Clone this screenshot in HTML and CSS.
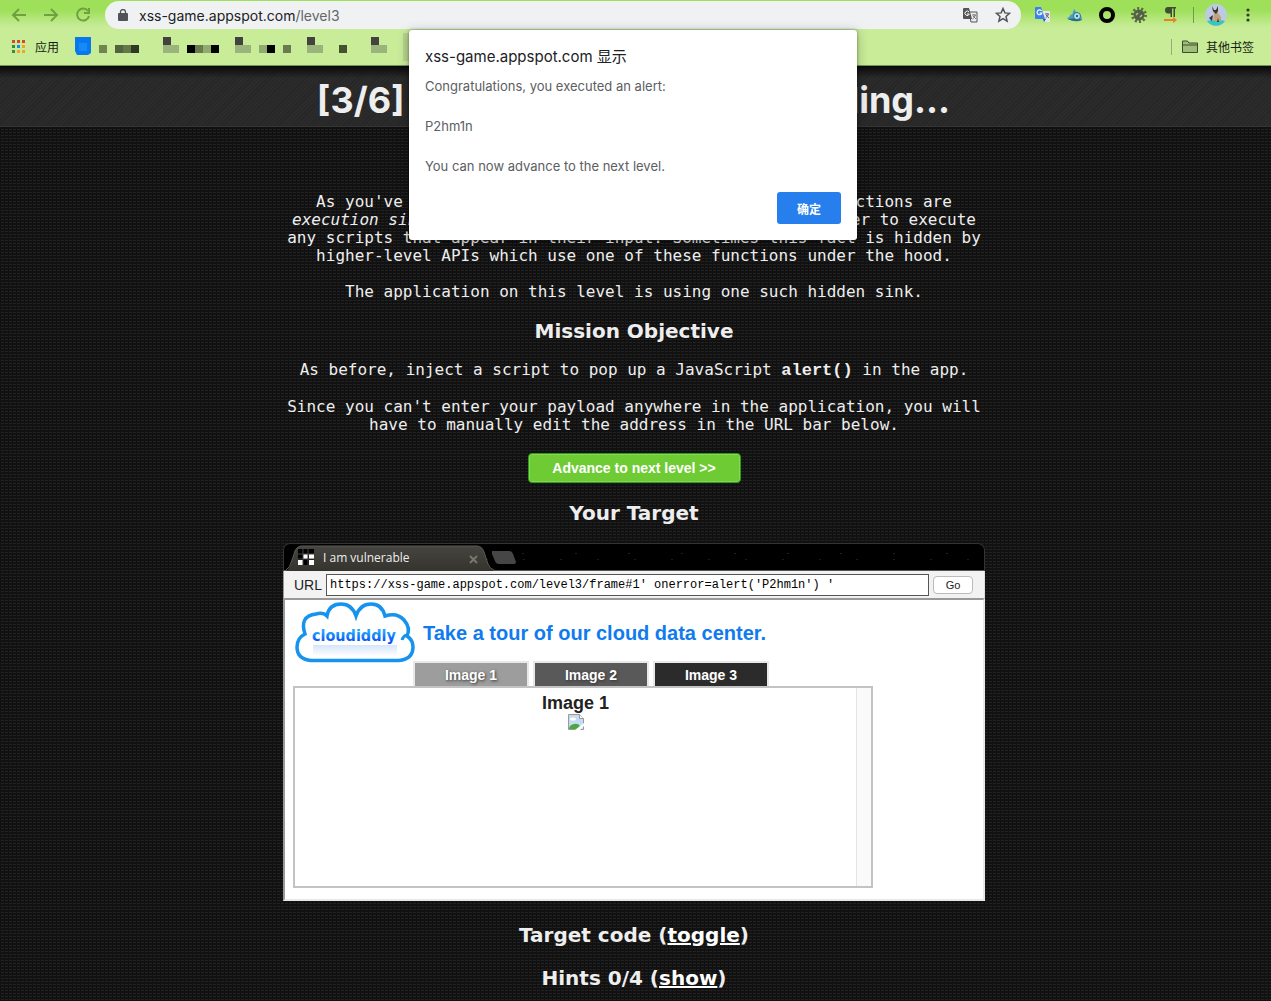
FILE: index.html
```html
<!DOCTYPE html>
<html lang="zh-CN">
<head>
<meta charset="utf-8">
<title>xss-game.appspot.com/level3</title>
<link rel="stylesheet" href="styles.css">
</head>
<body>
<header class="chrome">
  <div class="toolbar">
    <button class="nav" aria-label="Back"><svg width="16" height="16" viewBox="0 0 16 16"><path d="M15 8H2M8 2L2 8l6 6"/></svg></button>
    <button class="nav" aria-label="Forward"><svg width="16" height="16" viewBox="0 0 16 16"><path d="M1 8h13M8 2l6 6-6 6"/></svg></button>
    <button class="nav" aria-label="Reload"><svg width="16" height="16" viewBox="0 0 16 16"><path d="M13 4A6 6 0 1 0 14 9M14 1v5H9"/></svg></button>
    <div class="omnibox">
      <svg width="10" height="12" viewBox="0 0 10 12"><path d="M1 4h8q1 0 1 1v6q0 1-1 1H1q-1 0-1-1V5q0-1 1-1z" fill="#505357"/><path d="M2.500 4.500V3a2.500 2.500 0 0 1 5 0v1.500" fill="none" stroke="#505357" stroke-width="1.300"/></svg>
      <span class="address">xss-game.appspot.com<span class="path">/level3</span></span>
      <svg class="end" width="15" height="15" viewBox="0 0 15 15"><path d="M6 4h8v10H8z" fill="#eee" stroke="#555"/><path d="M1 0h5l3 11H1q-1 0-1-1V1q0-1 1-1z" fill="#555"/><path d="M9 7h4M11 6v1M12.500 7q-1 3-3 4M10 8l3 3" fill="none" stroke="#777"/><path d="M6 4a2.200 2.200 0 1 0 .3 2H4" fill="none" stroke="#fff"/></svg>
      <svg width="16" height="16" viewBox="0 0 16 16"><path d="M8 1.500l1.900 4.400 4.700.4-3.600 3.100 1.100 4.700L8 11.600l-4.100 2.500L5 9.400 1.400 6.300l4.700-.4z" fill="none" stroke="#505357" stroke-width="1.500"/></svg>
    </div>
    <div class="extensions">
      <svg width="16" height="16" viewBox="0 0 16 16"><path d="M7 4h8v11h-5z" fill="#e4e6e8"/><path d="M1 0h5l4 12H1q-1 0-1-1V1q0-1 1-1z" fill="#3b82ee"/><path d="M8 12h3l-2 3z" fill="#2457b8"/><path d="M6.500 4a2.400 2.400 0 1 0 .3 2H4.500" fill="none" stroke="#fff" stroke-width="1.200"/><path d="M10 7h4M12 6v1M13.500 7q-1 3-3 4M11 8l3 3" fill="none" stroke="#667"/></svg>
      <svg width="16" height="16" viewBox="0 0 16 16"><path d="M0 11q3-1 4-4l1 1 2-6 3 4q5 1 5 7H2z" fill="#4a9fc0"/><path d="M1 12q7 4 14 1l-4-2z" fill="#286989"/><circle cx="10" cy="9" r="3.500" fill="#b9e6ed" stroke="#2c6f8e"/><circle cx="10" cy="9" r="1.200" fill="#246483"/></svg>
      <svg width="16" height="16" viewBox="0 0 16 16"><circle cx="8" cy="8" r="6" fill="none" stroke="#000" stroke-width="4"/></svg>
      <svg width="16" height="16" viewBox="0 0 16 16"><circle cx="8" cy="8" r="6.500" fill="none" stroke="#596d3d" stroke-width="3" stroke-dasharray="2 2"/><circle cx="8" cy="8" r="5.500" fill="#555f47"/><path d="M5 8l2-2M9 10l2-2" stroke="#a9c878" stroke-width="1.500"/></svg>
      <svg width="16" height="16" viewBox="0 0 16 16"><path d="M5 0h8v1.500h-1V10h-1.500V1.500H9V10H7.500V6.500H5.500a3.200 3.200 0 0 1-.5-6.500z" fill="#3f4d32"/><path d="M1 13h10" stroke="#ef7d25" stroke-width="2"/><path d="M10 10l4 3-4 3z" fill="#ef7d25"/></svg>
      <span class="rule"></span>
      <svg class="avatar" width="22" height="22" viewBox="0 0 22 22"><circle cx="11" cy="11" r="11" fill="#bdcbe0"/><path d="M2 17q9-3 18 0a11 11 0 0 1-18 0z" fill="#35c6bf"/><path d="M7 3l2 3h2l2-3 0 6 3 4v4H8l1-7z" fill="#c5a17b"/><path d="M7 2l2 4h2l2-4v5l-2 3-3-3zM4 14l4-3-1 6zM13 14l1 4h-2z" fill="#38343b"/></svg>
      <svg width="4" height="14" viewBox="0 0 4 14" fill="#303f22"><circle cx="2" cy="2" r="1.600"/><circle cx="2" cy="7" r="1.600"/><circle cx="2" cy="12" r="1.600"/></svg>
    </div>
  </div>
  <nav class="bookmarks">
    <a class="apps" href="#"><svg width="14" height="14" viewBox="0 0 14 14"><path d="M0 0h3v3H0zM5 0h3v3H5zM10 0h3v3h-3z" fill="#d8462f"/><path d="M0 5h3v3H0zM0 10h3v3H0z" fill="#3a8c3c"/><path d="M5 5h3v3H5z" fill="#168af0"/><path d="M10 5h3v3h-3zM5 10h3v3H5zM10 10h3v3h-3z" fill="#f0a22b"/></svg>应用</a>
    <svg class="mosaic" width="336" height="28" viewBox="75 33 336 28"><path d="M75 37h16v16l-3 2H77l-2-4z" fill="#0879ed"/><path d="M79 43h8v8h-8z" fill="#168bf8"/><path d="M99 45h8v8h-8z" fill="#718553"/><path d="M115 45h8v8h-8z" fill="#536340"/><path d="M123 45h8v8h-8z" fill="#65784a"/><path d="M131 45h8v8h-8z" fill="#303923"/><path d="M163 37h8v8h-8zM235 37h8v8h-8zM307 37h8v8h-8zM371 37h8v8h-8z" fill="#424340"/><path d="M163 45h16v8h-16zM235 45h16v8h-16zM307 45h16v8h-16zM371 45h16v8h-16z" fill="#9bb47b"/><path d="M187 45h8v8h-8zM211 45h8v8h-8zM267 45h8v8h-8z" fill="#000"/><path d="M195 45h8v8h-8zM283 45h8v8h-8z" fill="#687b4e"/><path d="M203 45h8v8h-8zM259 45h8v8h-8z" fill="#91aa70"/><path d="M339 45h8v8h-8z" fill="#43522f"/><path d="M403 33h8v28h-8z" fill="#b5d68c"/></svg>
    <a class="other" href="#"><svg width="16" height="13" viewBox="0 0 16 13"><path d="M.5 12.500V1h5l1.500 2h8.500v9.500zM.5 5h15" fill="#a1bd7b" stroke="#3e4a30"/></svg>其他书签</a>
  </nav>
</header>
<div class="page">
  <h1 class="title">[3/6]&nbsp; Level 3: That sinking feeling...</h1>
  <main class="content">
    <section class="story">
      <p>As you've seen in the previous level, some common JS functions are<br><em>execution sinks</em> which means that they will cause the browser to execute<br>any scripts that appear in their input. Sometimes this fact is hidden by<br>higher-level APIs which use one of these functions under the hood.</p>
      <p>The application on this level is using one such hidden sink.</p>
    </section>
    <h2>Mission Objective</h2>
    <section class="mission">
      <p>As before, inject a script to pop up a JavaScript <b>alert()</b> in the app.</p>
      <p>Since you can't enter your payload anywhere in the application, you will<br>have to manually edit the address in the URL bar below.</p>
    </section>
    <button class="advance">Advance to next level &gt;&gt;</button>
    <h2>Your Target</h2>
    <section class="window">
      <div class="tabs">
        <svg class="shape" width="232" height="27" viewBox="0 0 232 27"><defs><linearGradient id="tab" x2="0" y2="1"><stop stop-color="#46453f"/><stop offset="1" stop-color="#34332e"/></linearGradient></defs><path d="M2 27q4-2 6-11l3-9q2-5 7-5h175q5 0 7 6l4 12q2 5 6 7z" fill="url(#tab)"/><path d="M2 26q4-2 6-10l3-9q2-5 7-5h175q5 0 7 6l4 12q2 5 6 6" fill="none" stroke="#5b5a54"/><path d="M208 7h17q3 0 4 3l3 8q0 2-2 2h-15q-3 0-4-3l-3-7z" fill="#464646"/><path d="M186 12l7 7M193 12l-7 7" stroke="#77766f" stroke-width="2"/></svg>
        <div class="tab"><svg width="16" height="16" viewBox="0 0 16 16"><path d="M0 0h16v16H0z"/><path d="M5 5h5v5H5zM11 5h5v5h-5zM0 11h5v5H0zM11 11h5v5h-5z" fill="#fff"/><path d="M5 0v16M10 0v16M0 5h16M0 10h16" stroke="#444"/></svg>I am vulnerable</div>
      </div>
      <form class="urlbar">
        <label for="url">URL</label>
        <input id="url" type="text" value="https://xss-game.appspot.com/level3/frame#1' onerror=alert('P2hm1n') '">
        <button type="button" class="go">Go</button>
      </form>
      <div class="frame">
        <div class="brand">
          <svg width="120" height="62" viewBox="0 0 120 62"><defs><linearGradient id="word" x2="0" y2="1"><stop offset=".3" stop-color="#20a4ff"/><stop offset=".8" stop-color="#0753f8"/></linearGradient><linearGradient id="fade" x2="0" y2="1"><stop stop-color="#a9cbf7"/><stop offset="1" stop-color="#fff"/></linearGradient></defs><path d="M16 58.500Q2 57 2 45 2 36 10 32 4 14 21 12q7-2 11 2Q34 2 46 2q11 0 15 12Q65 2 76 2q11 0 14 12 12-4 19 4 7 8 3 16 6 4 6 11 0 12-14 13.500z" fill="#fff" stroke="#1593ee" stroke-width="3.500"/><path d="M107 38q1-4 5-5" fill="none" stroke="#1593ee" stroke-width="3"/><path d="M18 43h84v11H18z" fill="url(#fade)" opacity=".5"/><text x="17" y="39" class="logo" fill="url(#word)">cloudiddly</text></svg>
          <h3>Take a tour of our cloud data center.</h3>
        </div>
        <div class="choices"><button class="one">Image 1</button><button class="two">Image 2</button><button class="three">Image 3</button></div>
        <div class="viewer">
          <div class="picture"><h4>Image 1</h4>
          <svg width="16" height="16" viewBox="0 0 16 16"><path d="M.5.5h11l4 4v11H.5z" fill="#c5dcf5" stroke="#9a9a9a"/><path d="M11.500.5v4h4" fill="#fff" stroke="#9a9a9a"/><ellipse cx="5" cy="5" rx="3" ry="1.500" fill="#fff"/><path d="M1 15q0-4 5-5 4-1 6 2l-3 3z" fill="#4ba83f"/><path d="M7 16l9-7v3l-4 4z" fill="#fff"/></svg></div>
          <div class="track"></div>
        </div>
      </div>
    </section>
    <h2>Target code (<a href="#">toggle</a>)</h2>
    <h2>Hints 0/4 (<a href="#">show</a>)</h2>
  </main>
</div>
<div class="dialog" role="dialog" aria-labelledby="dialog-title">
  <h2 id="dialog-title">xss-game.appspot.com 显示</h2>
  <p>Congratulations, you executed an alert:</p>
  <p>P2hm1n</p>
  <p>You can now advance to the next level.</p>
  <button class="ok">确定</button>
</div>
</body>
</html>
```
FILE: styles.css
```css
* { box-sizing: border-box; }
html { background: #111; }
body {
  margin: 0;
  position: relative;
  font-family: Inter, "Noto Sans CJK SC", sans-serif;
  overflow-x: hidden;
}
h1, h2, h3, h4, p { margin: 0; }
button { font: inherit; border: 0; padding: 0; }
svg { display: block; flex: none; }

.chrome {
  height: 66px;
  padding-top: 1px;
  background: linear-gradient(#9ee05a, #9ee05a 10px, #c8ec98 27px);
  border-bottom: 1px solid #78905b;
}
.toolbar { display: flex; align-items: center; height: 28px; padding: 0 21px 0 11px; }
.nav { width: 16px; margin-right: 16px; background: none; }
.nav svg { fill: none; stroke: #71a043; stroke-width: 2; }
.omnibox {
  flex: 1;
  display: flex;
  align-items: center;
  height: 28px;
  margin-left: -2px;
  padding: 0 10px 0 13px;
  border-radius: 14px;
  background: #eff1f3;
}
.address { margin-left: 11px; font-size: 14px; color: #202124; }
.path { color: #63666a; }
.end { margin: 0 17px 0 auto; }
.extensions { display: flex; align-items: center; gap: 16px; margin-left: 14px; }
.rule { width: 1px; height: 16px; margin-left: -2px; background: #739b4b; }
.avatar { margin: 0 4px 0 -5px; }
.extensions svg:last-child { margin-left: -1px; }
.bookmarks { display: flex; align-items: center; height: 35px; padding: 0 17px 0 12px; overflow: hidden; }
.bookmarks a { display: flex; align-items: center; font-size: 12px; color: #161b10; text-decoration: none; }
.apps { gap: 9px; }
.mosaic { margin-left: 16px; }
.other { gap: 8px; margin-left: auto; }
.other::before { content: ""; width: 1px; height: 16px; margin-right: 2px; background: #94ae73; }

.page {
  min-height: 935px;
  background-color: #111;
  background-image: repeating-linear-gradient(90deg, #111 0 1px, transparent 1px 4px), repeating-linear-gradient(#222 0 1px, transparent 1px 3px);
}
.title {
  height: 61px;
  padding-right: 4px;
  border-bottom: 1px solid #353535;
  background: linear-gradient(#090909, transparent 12px), repeating-linear-gradient(135deg, #2b2b2b 0 2px, #262626 2px 3px);
  color: #eee;
  font: 700 36px/68px Inter, sans-serif;
  text-align: center;
  white-space: nowrap;
}
.content {
  display: flex;
  flex-direction: column;
  align-items: center;
  padding: 66px 3px 10px 0;
  color: #eee;
  text-align: center;
}
.content section p { font: 16px/18px "DejaVu Sans Mono", monospace; }
.content section b { font: 700 17px/18px "Liberation Mono", monospace; }
.content section p + p { margin-top: 18px; }
.content > h2 { margin: 17px 0; font: 700 20px/26px "DejaVu Sans", sans-serif; }
.content > h2 + h2 { margin-top: 0; }
.content > h2 a { color: #fff; text-decoration-thickness: 2px; }
.advance {
  width: 213px;
  height: 30px;
  margin-top: 19px;
  border: 1px solid #2e9a1c;
  border-radius: 4px;
  background: #6ecb34;
  box-shadow: inset 0 0 0 1px #85d852;
  color: #fff;
  font: 700 14px "Liberation Sans", sans-serif;
}

.window { width: 702px; max-width: 100%; margin-bottom: 4px; text-align: left; color: #222; }
.tabs {
  position: relative;
  height: 28px;
  border: 1px solid #333;
  border-bottom-color: #555;
  border-radius: 7px 7px 0 0;
  background-color: #000;
  background-image: radial-gradient(#222 1px, transparent 1px), radial-gradient(#1a1a1a 1px, transparent 1px);
  background-size: 53px 19px, 37px 31px;
}
.shape { position: absolute; top: 0; left: 0; }
.tab { position: relative; display: flex; align-items: center; gap: 9px; height: 26px; padding-left: 14px; color: #eee; font: 12px "Open Sans", sans-serif; }
.urlbar { display: flex; align-items: center; height: 27px; padding: 0 11px 0 10px; border-left: 1px solid #999; border-right: 1px solid #ddd; background: #f2f2f2; }
.urlbar label { margin-right: 4px; font: 14px "Liberation Sans", sans-serif; }
.urlbar input { flex: 1; min-width: 0; height: 22px; padding: 0 3px; border: 1px solid #555; border-radius: 0; background: #fff; color: #000; font: 12px "Liberation Mono", monospace; }
.go { width: 40px; height: 18px; margin-left: 4px; border: 1px solid #bbb; border-radius: 4px; background: #fff; color: #222; font: 11px "Liberation Sans", sans-serif; }
.frame { height: 303px; padding: 2px 8px 0; border: 2px solid #e8e8e8; border-top-color: #999; border-left-color: #999; background: #fff; }
.brand { display: flex; align-items: center; gap: 8px; margin-left: 2px; }
.brand h3 { color: #0f7bee; font: 700 20px/24px "Liberation Sans", sans-serif; }
.logo { font: 700 16px "DejaVu Sans Condensed", "DejaVu Sans", sans-serif; }
.choices { display: flex; gap: 4px; margin: -3px 0 0 120px; }
.choices button { width: 116px; height: 25px; border: 2px solid #e8e8e8; border-bottom: 0; color: #fff; font: 700 14px "Liberation Sans", sans-serif; text-shadow: 1px 1px 3px #333; }
.choices .one { background: #9d9d9d; }
.choices .two { background: #595959; }
.choices .three { background: #2b2b2b; }
.viewer { display: flex; width: 580px; max-width: 100%; height: 202px; border: 2px solid #c3c3c3; }
.picture { flex: 1; display: flex; flex-direction: column; align-items: center; padding-top: 4px; }
.picture h4 { font: 700 18px/22px "Liberation Sans", sans-serif; }
.track { width: 15px; border-left: 1px solid #e4e4e4; background: #fafafa; }

.dialog {
  position: absolute;
  top: 30px;
  left: 0;
  right: 5px;
  display: flex;
  flex-direction: column;
  gap: 20px;
  width: 448px;
  height: 210px;
  margin: 0 auto;
  padding: 17px 16px 16px;
  border-radius: 3px;
  background: #fff;
  box-shadow: 0 0 3px #0006, 0 2px 12px #0004;
  color: #5b5e62;
}
.dialog h2 { margin-bottom: -11px; font: 15px/20px Inter, "Noto Sans CJK SC", sans-serif; color: #202124; }
.dialog p { font-size: 13px; line-height: 20px; }
.ok { flex: none; align-self: flex-end; width: 64px; height: 32px; margin-top: -4px; border-radius: 3px; background: #267fec; color: #fff; font-size: 12px; font-weight: 700; }
```
